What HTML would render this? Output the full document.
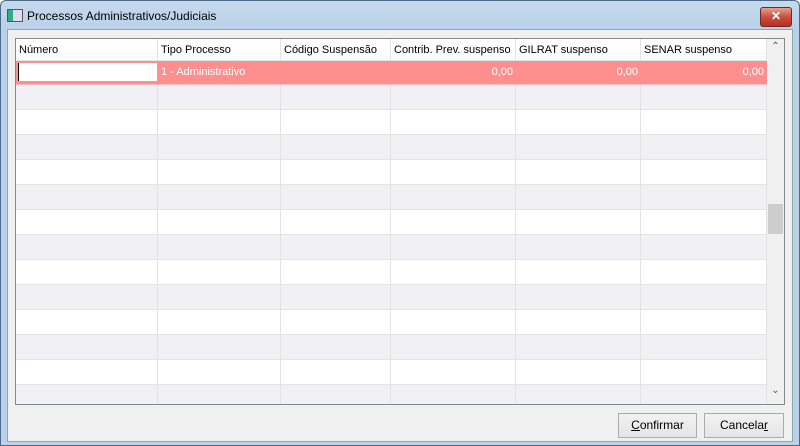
<html><head><style>
body{margin:0;width:800px;height:446px;overflow:hidden;font-family:"Liberation Sans",sans-serif;font-size:11px;background:#fff}
.win{position:absolute;left:0;top:0;width:798px;height:444px;border:1px solid #4a6a88;border-radius:6px 6px 0 0;background:linear-gradient(#c6d9ec,#b9d1ea 28px,#b9d1ea);}
.title{position:absolute;left:26px;top:8px;font-size:12px;color:#000}
.close{position:absolute;left:759px;top:6px;width:30px;height:18px;border:1px solid #6d2a24;border-radius:3px;background:linear-gradient(#e8a090,#c75040 50%,#b83020);color:#fff;font-weight:bold;text-align:center;line-height:17px;font-size:12px}
.client{position:absolute;left:7px;top:29px;width:784px;height:411px;background:#f0f0f0;border:1px solid #8aa;}
.grid{position:absolute;left:15px;top:38px;width:768px;height:365px;border:1px solid #828790;background:#fff;overflow:hidden}
.row{position:absolute;left:0;width:751px;height:25px;border-bottom:1px solid #e3e3e3}
.c{position:absolute;top:0;height:100%;border-right:1px solid #e3e3e3;box-sizing:border-box;padding:0 3px;line-height:22px;white-space:nowrap}
.btn{position:absolute;top:413px;height:23px;border:1px solid #acacac;background:linear-gradient(#f2f2f2,#e5e5e5);text-align:center;line-height:22px;font-size:12px}
</style></head><body>
<div class="win">
<div style="position:absolute;left:6px;top:8px;width:14px;height:11px;border:1px solid #556;background:linear-gradient(90deg,#3a8 0 5px,#dde 5px)"></div>
<div class="title">Processos Administrativos/Judiciais</div>
<div class="close">✕</div>
</div>
<div class="client"></div>
<div class="grid">
<div class="row" style="top:0;height:21px;background:#fff">
<div class="c" style="left:0;width:142px">Número</div><div class="c" style="left:142px;width:123px">Tipo Processo</div><div class="c" style="left:265px;width:110px">Código Suspensão</div><div class="c" style="left:375px;width:125px">Contrib. Prev. suspenso</div><div class="c" style="left:500px;width:125px">GILRAT suspenso</div><div class="c" style="left:625px;width:126px">SENAR suspenso</div></div>
<div class="row" style="top:22px;height:23px;background:#ff8f8f;color:#fff;border-color:#f5c0c0">
<div style="position:absolute;left:2px;top:2px;width:138px;height:18px;background:#fff;border-left:1px solid #000"></div>
<div class="c" style="left:142px;width:123px;border:0">1 - Administrativo</div>
<div class="c" style="left:375px;width:125px;border:0;text-align:right">0,00</div><div class="c" style="left:500px;width:125px;border:0;text-align:right">0,00</div><div class="c" style="left:625px;width:126px;border:0;text-align:right">0,00</div></div>
<div id="rows"></div>
<div style="position:absolute;left:751px;top:0;width:17px;height:365px;background:#f0f0f0">
<div style="position:absolute;top:2px;width:17px;text-align:center;font-size:10px;color:#555">&#8963;</div>
<div style="position:absolute;left:1px;top:165px;width:15px;height:30px;background:#cdcdcd"></div>
<div style="position:absolute;top:346px;width:17px;text-align:center;font-size:10px;color:#555">&#8964;</div></div>
</div>
<div class="btn" style="left:618px;width:77px"><u>C</u>onfirmar</div>
<div class="btn" style="left:704px;width:78px">Cancela<u>r</u></div>
<script>
var h='';for(var i=0;i<13;i++){var t=46+i*25;h+='<div class="row" style="top:'+t+'px;height:24px;background:'+(i%2?'#fff':'#f1f1f5')+'">';[0,142,265,375,500,625].forEach(function(l,j){var w=[142,123,110,125,125,126][j];h+='<div class="c" style="left:'+l+'px;width:'+w+'px"></div>'});h+='</div>'}
document.getElementById('rows').innerHTML=h;
</script>
</body></html>
